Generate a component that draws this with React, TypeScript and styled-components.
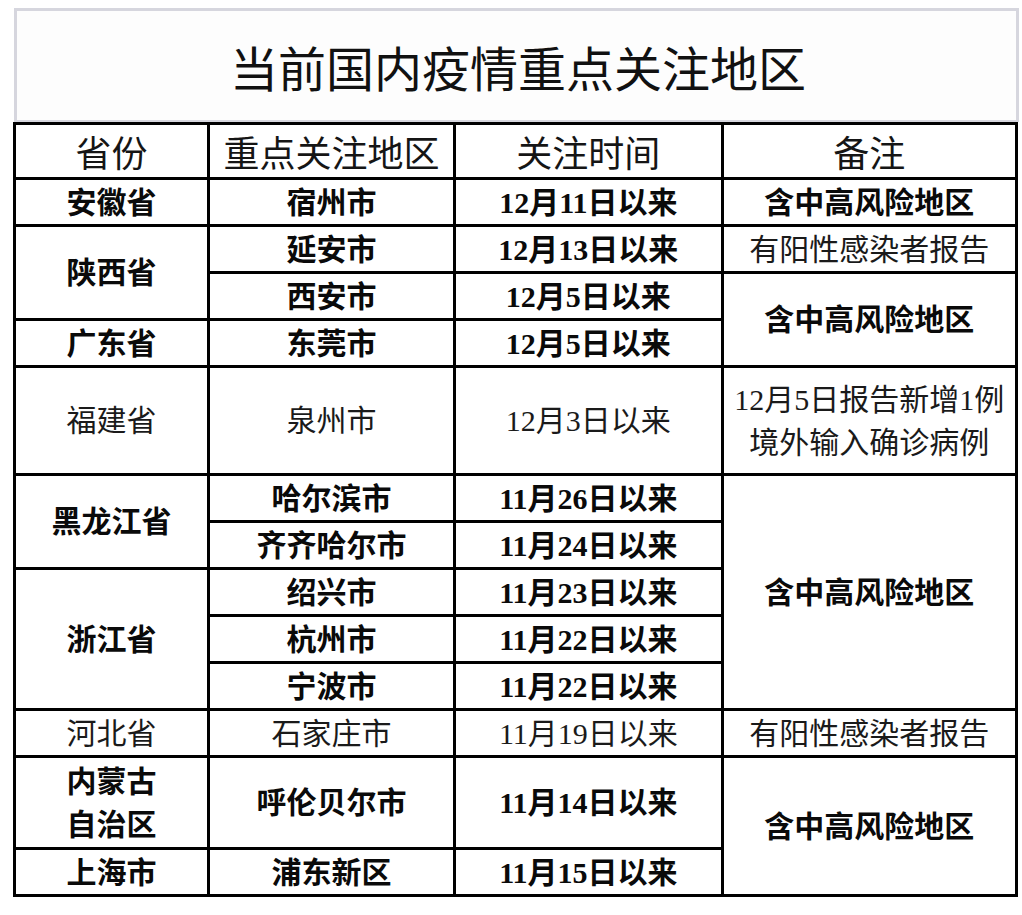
import React from "react";
import styled, { createGlobalStyle } from "styled-components";

const Global = createGlobalStyle`
  html, body { margin: 0; padding: 0; background: #ffffff; }
  body { font-family: "Liberation Serif", "Noto Sans CJK SC", sans-serif; color: #111; }
`;

const Page = styled.div`
  padding: 8px 0 0 14px;
  width: 1005px;
`;

const TitleBox = styled.div`
  box-sizing: border-box;
  height: 114px;
  border: 3px solid #d6d6de;
  border-bottom-width: 2px;
  background: #fdfdfd;
  display: flex;
  align-items: center;
  justify-content: center;
  font-family: "Noto Sans CJK SC", sans-serif;
  font-size: 48px;
  font-weight: 400;
  color: #111;
  padding-left: 3px;
`;

const Table = styled.table`
  border-collapse: collapse;
  table-layout: fixed;
  width: 1005px;
  margin-left: -1px;
  background: #fff;
`;

const HeadCell = styled.th<{ $w: number }>`
  width: ${(p) => p.$w}px;
  height: 51px;
  border: 3.4px solid #000;
  padding: 0;
  font-family: "Noto Sans CJK SC", sans-serif;
  font-size: 36px;
  font-weight: 400;
  text-align: center;
  vertical-align: middle;
  color: #151515;
`;

const Row = styled.tr<{ $h?: number }>`
  height: ${(p) => p.$h ?? 47}px;
`;

const Cell = styled.td<{ $bold?: boolean }>`
  border: 3.4px solid #000;
  padding: 0;
  text-align: center;
  vertical-align: middle;
  font-family: "Liberation Serif", "Noto Sans CJK SC", serif;
  font-size: 30px;
  line-height: 43px;
  font-weight: ${(p) => (p.$bold ? 700 : 400)};
  color: ${(p) => (p.$bold ? "#0a0a0a" : "#1a1a1a")};
  white-space: nowrap;
`;

const Line = styled.div`
  display: block;
`;

const HIGH = "含中高风险地区";
const POS = "有阳性感染者报告";

export default function App() {
  return (
    <>
      <Global />
      <Page>
        <TitleBox>当前国内疫情重点关注地区</TitleBox>
        <Table>
          <thead>
            <tr>
              <HeadCell $w={190.5}>省份</HeadCell>
              <HeadCell $w={243}>重点关注地区</HeadCell>
              <HeadCell $w={264}>关注时间</HeadCell>
              <HeadCell $w={291}>备注</HeadCell>
            </tr>
          </thead>
          <tbody>
            <Row>
              <Cell $bold>安徽省</Cell>
              <Cell $bold>宿州市</Cell>
              <Cell $bold>12月11日以来</Cell>
              <Cell $bold>{HIGH}</Cell>
            </Row>
            <Row>
              <Cell $bold rowSpan={2}>陕西省</Cell>
              <Cell $bold>延安市</Cell>
              <Cell $bold>12月13日以来</Cell>
              <Cell>{POS}</Cell>
            </Row>
            <Row>
              <Cell $bold>西安市</Cell>
              <Cell $bold>12月5日以来</Cell>
              <Cell $bold rowSpan={2}>{HIGH}</Cell>
            </Row>
            <Row>
              <Cell $bold>广东省</Cell>
              <Cell $bold>东莞市</Cell>
              <Cell $bold>12月5日以来</Cell>
            </Row>
            <Row $h={108}>
              <Cell>福建省</Cell>
              <Cell>泉州市</Cell>
              <Cell>12月3日以来</Cell>
              <Cell>
                <Line>12月5日报告新增1例</Line>
                <Line>境外输入确诊病例</Line>
              </Cell>
            </Row>
            <Row>
              <Cell $bold rowSpan={2}>黑龙江省</Cell>
              <Cell $bold>哈尔滨市</Cell>
              <Cell $bold>11月26日以来</Cell>
              <Cell $bold rowSpan={5}>{HIGH}</Cell>
            </Row>
            <Row>
              <Cell $bold>齐齐哈尔市</Cell>
              <Cell $bold>11月24日以来</Cell>
            </Row>
            <Row>
              <Cell $bold rowSpan={3}>浙江省</Cell>
              <Cell $bold>绍兴市</Cell>
              <Cell $bold>11月23日以来</Cell>
            </Row>
            <Row>
              <Cell $bold>杭州市</Cell>
              <Cell $bold>11月22日以来</Cell>
            </Row>
            <Row>
              <Cell $bold>宁波市</Cell>
              <Cell $bold>11月22日以来</Cell>
            </Row>
            <Row>
              <Cell>河北省</Cell>
              <Cell>石家庄市</Cell>
              <Cell>11月19日以来</Cell>
              <Cell>{POS}</Cell>
            </Row>
            <Row $h={92}>
              <Cell $bold>
                <Line>内蒙古</Line>
                <Line>自治区</Line>
              </Cell>
              <Cell $bold>呼伦贝尔市</Cell>
              <Cell $bold>11月14日以来</Cell>
              <Cell $bold rowSpan={2}>{HIGH}</Cell>
            </Row>
            <Row>
              <Cell $bold>上海市</Cell>
              <Cell $bold>浦东新区</Cell>
              <Cell $bold>11月15日以来</Cell>
            </Row>
          </tbody>
        </Table>
      </Page>
    </>
  );
}
